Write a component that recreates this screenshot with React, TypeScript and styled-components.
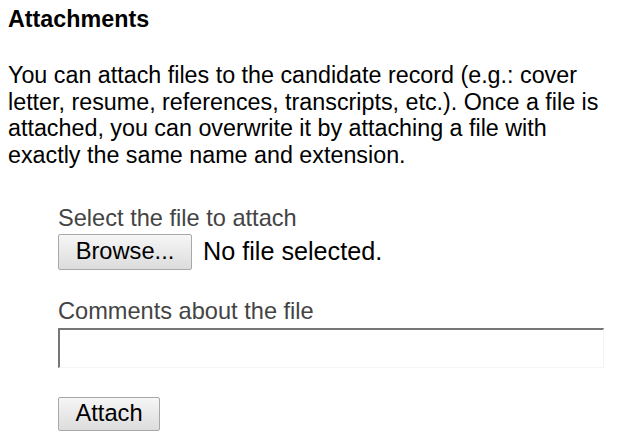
import React from "react";
import styled, { createGlobalStyle } from "styled-components";

const Global = createGlobalStyle`
  body {
    margin: 0;
    background: #ffffff;
    font-family: "Liberation Sans", Arial, sans-serif;
    color: #000000;
  }
`;

const Page = styled.div`
  padding: 6px 8px 0 8px;
  width: 620px;
  box-sizing: border-box;
`;

const Heading = styled.h2`
  margin: 0;
  font-size: 23.3px;
  font-weight: bold;
  line-height: 26px;
`;

const Intro = styled.p`
  margin: 30px 0 0 0;
  font-size: 23.3px;
  line-height: 26.7px;
  width: 600px;
`;

const Form = styled.div`
  display: flex;
  flex-direction: column;
  margin: 36px 0 0 50px;
`;

const Label = styled.div`
  font-size: 23.6px;
  line-height: 26px;
  color: #444444;
`;

const FileRow = styled.div`
  display: flex;
  align-items: center;
  gap: 11px;
  margin-top: 3px;
`;

const Button = styled.button<{ width: string; height: string }>`
  width: ${(p) => p.width};
  height: ${(p) => p.height};
  padding: 0;
  font-family: "Liberation Sans", Arial, sans-serif;
  font-size: 23.7px;
  color: #000000;
  border: 1px solid #a8a8a8;
  border-radius: 2px;
  background: linear-gradient(#f6f6f6, #dcdcdc);
`;

const Status = styled.span`
  font-size: 25.2px;
`;

const Section = styled.div`
  margin-top: 28px;
`;

const CommentInput = styled.input`
  display: block;
  box-sizing: border-box;
  width: 546px;
  height: 40px;
  margin-top: 4px;
  border-style: solid;
  border-width: 2px 1px 1px 2px;
  border-color: #767676 #f4f4f4 #f4f4f4 #767676;
  background: #ffffff;
`;

const Actions = styled.div`
  margin-top: 29px;
`;

export default function App() {
  return (
    <Page>
      <Global />
      <Heading>Attachments</Heading>
      <Intro>
        You can attach files to the candidate record (e.g.: cover letter,
        resume, references, transcripts, etc.). Once a file is attached, you
        can overwrite it by attaching a file with exactly the same name and
        extension.
      </Intro>
      <Form>
        <Label>Select the file to attach</Label>
        <FileRow>
          <Button width="134px" height="36px">
            Browse...
          </Button>
          <Status>No file selected.</Status>
        </FileRow>
        <Section>
          <Label>Comments about the file</Label>
          <CommentInput type="text" />
        </Section>
        <Actions>
          <Button width="102px" height="34px">
            Attach
          </Button>
        </Actions>
      </Form>
    </Page>
  );
}
